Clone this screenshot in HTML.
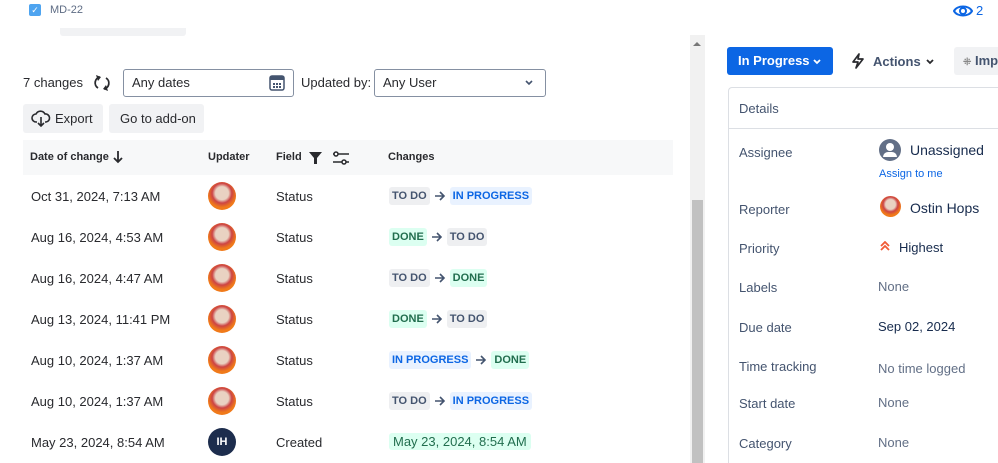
<!DOCTYPE html>
<html><head><meta charset="utf-8"><style>
*{box-sizing:border-box;margin:0;padding:0}
html,body{width:998px;height:463px;overflow:hidden}
body{background:#fff;font-family:"Liberation Sans",sans-serif;color:#172b4d;position:relative;font-size:13px}
.a{position:absolute}
.row{position:absolute;left:23px;width:650px;height:41px}
.row span{position:absolute;top:0;line-height:41px;font-size:13px;color:#292a2e}
.av{position:absolute;left:185px;top:6px;width:28px;height:28px;border-radius:50%;background:radial-gradient(circle at 50% 40%,#e9d2c2 0 30%,#c44 45%,#f07a1a 65%)}
.ch{position:absolute;left:366px;top:11px;display:flex;align-items:center;gap:4px}
.lz{font-size:11px;font-weight:bold;padding:2px 3px;border-radius:3px;line-height:14px}
.td{background:#eeeff1;color:#44546f}
.ip{background:#e9f2ff;color:#0c66e4}
.dn{background:#dcfff1;color:#216e4e}
.lab{position:absolute;left:739px;font-size:13px;color:#44546f}
.val{position:absolute;left:878px;font-size:13px;color:#172b4d}
.gr{color:#626f86}
</style></head><body>
<svg width="0" height="0" style="position:absolute"><defs><symbol id="ar" viewBox="0 0 12 10"><path d="M1 5H10M6 1L10 5L6 9" fill="none" stroke="#44546f" stroke-width="1.6"/></symbol></defs></svg>
<div class="a" style="left:29px;top:4px;width:12px;height:12px;background:#4ea4f0;border-radius:2px;color:#fff;font-size:9px;line-height:12px;text-align:center">✓</div>
<div class="a" style="left:50px;top:4px;font-size:11px;color:#5e6c84">MD-22</div>
<svg class="a" style="left:953px;top:3px" width="20" height="16" viewBox="0 0 20 16"><path d="M1 8C4 2 16 2 19 8C16 14 4 14 1 8Z" fill="none" stroke="#0c66e4" stroke-width="2"/><circle cx="10" cy="8" r="3" fill="none" stroke="#0c66e4" stroke-width="2"/></svg>
<div class="a" style="left:976px;top:3px;font-size:13px;color:#0c66e4">2</div>
<div class="a" style="left:60px;top:28px;width:126px;height:8px;background:#f1f2f4;border-radius:0 0 3px 3px"></div>
<div class="a" style="left:690px;top:35px;width:15px;height:428px;background:#f1f1f1"></div>
<div class="a" style="left:692px;top:200px;width:11px;height:263px;background:#c1c1c1"></div>
<div class="a" style="left:693px;top:42px;width:0;height:0;border-left:4px solid transparent;border-right:4px solid transparent;border-bottom:4px solid #777"></div>
<div class="a" style="left:23px;top:75px;font-size:13px;color:#292a2e">7 changes</div>
<svg class="a" style="left:93px;top:74px" width="18" height="18" viewBox="0 0 18 18"><g fill="none" stroke="#292a2e" stroke-width="1.8"><path d="M7 3A6 6 0 0 0 5 14"/><path d="M11 15A6 6 0 0 0 13 4"/></g><path d="M3 1L8 3L5 7Z M15 17L10 15L13 11Z" fill="#292a2e"/></svg>
<div class="a" style="left:123px;top:69px;width:171px;height:28px;border:1px solid #8590a2;border-radius:3px"></div>
<div class="a" style="left:132px;top:75px;font-size:13px;color:#292a2e">Any dates</div>
<svg class="a" style="left:269px;top:74px" width="16" height="17" viewBox="0 0 16 17"><rect x="1" y="2" width="14" height="14" rx="2" fill="none" stroke="#44546f" stroke-width="1.5"/><rect x="1" y="2" width="14" height="4" fill="#44546f"/><g fill="#44546f"><rect x="4" y="9" width="2" height="2"/><rect x="7" y="9" width="2" height="2"/><rect x="10" y="9" width="2" height="2"/><rect x="4" y="12" width="2" height="2"/><rect x="7" y="12" width="2" height="2"/><rect x="10" y="12" width="2" height="2"/></g></svg>
<div class="a" style="left:301px;top:75px;font-size:13px;color:#292a2e">Updated by:</div>
<div class="a" style="left:374px;top:69px;width:172px;height:28px;border:1px solid #8590a2;border-radius:3px"></div>
<div class="a" style="left:383px;top:75px;font-size:13px;color:#292a2e">Any User</div>
<svg class="a" style="left:524px;top:79px" width="10" height="7" viewBox="0 0 10 7"><path d="M2 2L5 5L8 2" fill="none" stroke="#44546f" stroke-width="1.6"/></svg>
<div class="a" style="left:23px;top:104px;width:80px;height:29px;background:#f1f2f4;border-radius:3px"></div>
<svg class="a" style="left:31px;top:110px" width="20" height="18" viewBox="0 0 20 18"><path d="M6 12H5A4 4 0 0 1 5 4A5 5 0 0 1 14 4A4 4 0 0 1 15 12H14M10 7V16M7 13L10 16L13 13" fill="none" stroke="#292a2e" stroke-width="1.6"/></svg>
<div class="a" style="left:55px;top:111px;font-size:13px;color:#292a2e">Export</div>
<div class="a" style="left:109px;top:104px;width:95px;height:29px;background:#f1f2f4;border-radius:3px"></div>
<div class="a" style="left:120px;top:111px;font-size:13px;color:#292a2e">Go to add-on</div>
<div class="a" style="left:23px;top:140px;width:650px;height:35px;background:#f7f8f9"></div>
<div class="a" style="left:30px;top:151px;font-size:11px;font-weight:bold;color:#292a2e">Date of change</div>
<svg class="a" style="left:112px;top:150px" width="12" height="14" viewBox="0 0 12 14"><path d="M6 1V12M2 8L6 12L10 8" fill="none" stroke="#292a2e" stroke-width="1.8"/></svg>
<div class="a" style="left:208px;top:151px;font-size:11px;font-weight:bold;color:#292a2e">Updater</div>
<div class="a" style="left:276px;top:151px;font-size:11px;font-weight:bold;color:#292a2e">Field</div>
<svg class="a" style="left:309px;top:151px" width="44" height="14" viewBox="0 0 44 14"><path d="M0 1H13L8 7V13H5V7Z" fill="#292a2e"/><g stroke="#292a2e" stroke-width="1.5" fill="none"><path d="M24 3H40M24 11H40"/><circle cx="27" cy="3" r="2" fill="#fff"/><circle cx="35" cy="11" r="2" fill="#fff"/></g></svg>
<div class="a" style="left:388px;top:151px;font-size:11px;font-weight:bold;color:#292a2e">Changes</div>
<div class="row" style="top:176px"><span style="left:8px">Oct 31, 2024, 7:13 AM</span><div class="av"></div><span style="left:253px">Status</span><div class="ch"><b class="lz td">TO DO</b><svg width="12" height="10"><use href="#ar"/></svg><b class="lz ip">IN PROGRESS</b></div></div>
<div class="row" style="top:217px"><span style="left:8px">Aug 16, 2024, 4:53 AM</span><div class="av"></div><span style="left:253px">Status</span><div class="ch"><b class="lz dn">DONE</b><svg width="12" height="10"><use href="#ar"/></svg><b class="lz td">TO DO</b></div></div>
<div class="row" style="top:258px"><span style="left:8px">Aug 16, 2024, 4:47 AM</span><div class="av"></div><span style="left:253px">Status</span><div class="ch"><b class="lz td">TO DO</b><svg width="12" height="10"><use href="#ar"/></svg><b class="lz dn">DONE</b></div></div>
<div class="row" style="top:299px"><span style="left:8px">Aug 13, 2024, 11:41 PM</span><div class="av"></div><span style="left:253px">Status</span><div class="ch"><b class="lz dn">DONE</b><svg width="12" height="10"><use href="#ar"/></svg><b class="lz td">TO DO</b></div></div>
<div class="row" style="top:340px"><span style="left:8px">Aug 10, 2024, 1:37 AM</span><div class="av"></div><span style="left:253px">Status</span><div class="ch"><b class="lz ip">IN PROGRESS</b><svg width="12" height="10"><use href="#ar"/></svg><b class="lz dn">DONE</b></div></div>
<div class="row" style="top:381px"><span style="left:8px">Aug 10, 2024, 1:37 AM</span><div class="av"></div><span style="left:253px">Status</span><div class="ch"><b class="lz td">TO DO</b><svg width="12" height="10"><use href="#ar"/></svg><b class="lz ip">IN PROGRESS</b></div></div>
<div class="row" style="top:422px"><span style="left:8px">May 23, 2024, 8:54 AM</span><div class="av" style="background:#1d2d4d;color:#fff;font-size:11px;line-height:28px;text-align:center;font-weight:bold">IH</div><span style="left:253px">Created</span><div class="ch"><b class="lz dn" style="font-weight:normal;font-size:13px;line-height:15px;padding:1px 4px">May 23, 2024, 8:54 AM</b></div></div>
<div class="a" style="left:727px;top:47px;width:106px;height:28px;background:#0c66e4;border-radius:3px;color:#fff;font-size:13px;font-weight:bold;line-height:28px;padding-left:11px">In Progress</div>
<svg class="a" style="left:812px;top:58px" width="10" height="7" viewBox="0 0 10 7"><path d="M2 2L5 5L8 2" fill="none" stroke="#fff" stroke-width="1.8"/></svg>
<svg class="a" style="left:851px;top:53px" width="14" height="16" viewBox="0 0 14 16"><path d="M8 1L2 9H7L5 15L12 6H7Z" fill="none" stroke="#292a2e" stroke-width="1.7" stroke-linejoin="round"/></svg>
<div class="a" style="left:873px;top:54px;font-size:13px;font-weight:bold;color:#44546f">Actions</div>
<svg class="a" style="left:925px;top:58px" width="10" height="7" viewBox="0 0 10 7"><path d="M2 2L5 5L8 2" fill="none" stroke="#292a2e" stroke-width="1.8"/></svg>
<div class="a" style="left:954px;top:47px;width:44px;height:28px;background:#f1f2f4;border-radius:3px 0 0 3px;font-size:13px;font-weight:bold;color:#44546f;line-height:28px;padding-left:9px;white-space:nowrap;overflow:hidden"><span style="font-size:10px;color:#888">⁜</span> Imp</div>
<div class="a" style="left:728px;top:87px;width:270px;height:376px;border:1px solid #dcdfe4;border-right:none;border-bottom:none;border-radius:4px 0 0 0"></div>
<div class="a" style="left:728px;top:128px;width:270px;height:1px;background:#dcdfe4"></div>
<div class="a" style="left:739px;top:101px;font-size:13px;color:#44546f">Details</div>
<div class="lab" style="top:145px">Assignee</div>
<div class="a" style="left:879px;top:139px;width:22px;height:22px;border-radius:50%;background:#626f86"></div>
<div class="a" style="left:886px;top:143px;width:8px;height:8px;border-radius:50%;background:#fff"></div>
<div class="a" style="left:883px;top:152px;width:14px;height:5px;border-radius:5px 5px 0 0;background:#fff"></div>
<div class="val" style="left:910px;top:142px;font-size:14px;color:#172b4d">Unassigned</div>
<div class="a" style="left:879px;top:168px;font-size:11px;color:#0c66e4">Assign to me</div>
<div class="lab" style="top:202px">Reporter</div>
<div class="a" style="left:880px;top:196px;width:21px;height:21px;border-radius:50%;background:radial-gradient(circle at 50% 40%,#e9d2c2 0 30%,#c44 45%,#f07a1a 65%)"></div>
<div class="val" style="left:910px;top:200px;font-size:14px">Ostin Hops</div>
<div class="lab" style="top:241px">Priority</div>
<svg class="a" style="left:879px;top:241px" width="12" height="10" viewBox="0 0 12 10"><path d="M2 5L6 1L10 5M2 9L6 5L10 9" fill="none" stroke="#f15b36" stroke-width="1.8"/></svg>
<div class="val" style="left:899px;top:240px;font-size:13px">Highest</div>
<div class="lab" style="top:280px">Labels</div><div class="val gr" style="top:279px">None</div>
<div class="lab" style="top:320px">Due date</div><div class="val" style="top:319px">Sep 02, 2024</div>
<div class="lab" style="top:359px">Time tracking</div><div class="val gr" style="top:361px">No time logged</div>
<div class="lab" style="top:396px">Start date</div><div class="val gr" style="top:395px">None</div>
<div class="lab" style="top:436px">Category</div><div class="val gr" style="top:435px">None</div>
</body></html>
